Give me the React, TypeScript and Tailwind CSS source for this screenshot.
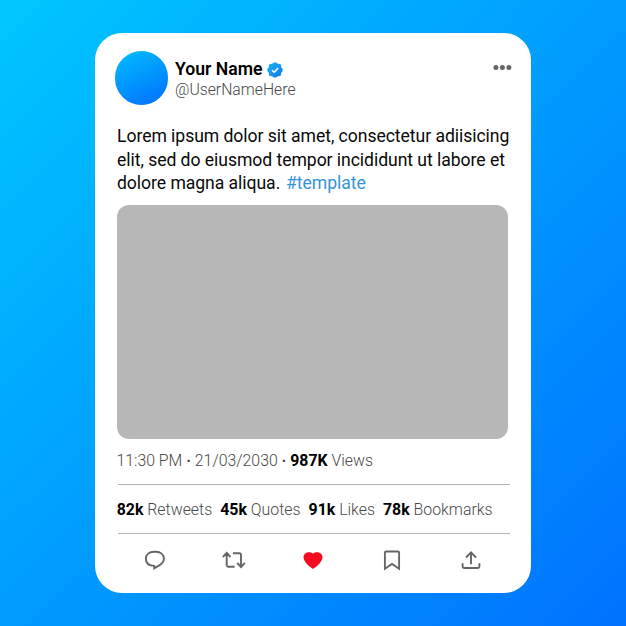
import React from "react";

function Stat({ value, label }: { value: string; label: string }) {
  return (
    <span>
      <b className="font-bold text-black">{value}</b> {label}
    </span>
  );
}

function VerifiedBadge() {
  const lobes = [0, 45, 90, 135, 180, 225, 270, 315];
  return (
    <svg className="ml-[5px] h-4 w-4" viewBox="0 0 16 16">
      <defs>
        <linearGradient id="badge" x1="1" y1="1" x2="15" y2="15" gradientUnits="userSpaceOnUse">
          <stop stopColor="#16b2fa" />
          <stop offset="1" stopColor="#1478ea" />
        </linearGradient>
      </defs>
      <g fill="url(#badge)">
        <circle cx="8" cy="8" r="6.9" />
        {lobes.map((a) => (
          <circle
            key={a}
            cx={8 + 5.6 * Math.cos((a * Math.PI) / 180)}
            cy={8 + 5.6 * Math.sin((a * Math.PI) / 180)}
            r="2.2"
          />
        ))}
      </g>
      <path d="M5 8.2 7.2 10.3 11.2 5.9" fill="none" stroke="#fff" strokeWidth="1.5" />
    </svg>
  );
}

export default function App() {
  return (
    <div className="flex h-[626px] w-[626px] bg-[linear-gradient(135deg,#00c6ff,#0072ff)] pl-[95px] pt-[33px] font-[Roboto,sans-serif]">
      <main className="flex h-[560px] w-[436px] flex-col rounded-[27px] bg-white pl-[22px] pr-5">
        <header className="-ml-[2px] mt-[18px] flex h-[54px]">
          <div className="h-[54px] w-[53px] shrink-0 rounded-full bg-[linear-gradient(155deg,#00baff_5%,#0072ff_95%)]" />
          <div className="ml-[7px] flex flex-col pt-2">
            <div className="flex h-[21px] items-center whitespace-nowrap">
              <h1 className="text-[17.6px] font-semibold text-black">Your Name</h1>
              <VerifiedBadge />
            </div>
            <p className="h-[19px] text-[15.75px] font-[350] leading-[20px] text-[#484848]">@UserNameHere</p>
          </div>
          <svg className="ml-auto mr-[-1px] mt-[13px] h-[7px] w-[19px]" viewBox="0 0 19 7" fill="#656565">
            <circle cx="2.9" cy="3.5" r="2.5" />
            <circle cx="9.4" cy="3.5" r="2.5" />
            <circle cx="15.9" cy="3.5" r="2.5" />
          </svg>
        </header>

        <div className="mt-[20px] whitespace-nowrap text-[17.6px] leading-[23.7px] tracking-[-0.055px] text-[#080808]">
          <p>Lorem ipsum dolor sit amet, consectetur adiisicing</p>
          <p>elit, sed do eiusmod tempor incididunt ut labore et</p>
          <p>
            dolore magna aliqua. <span className="ml-[1.5px] text-[#3494d9]">#template</span>
          </p>
        </div>

        <div className="ml-[0.4px] mt-[8.9px] h-[234px] w-[391px] shrink-0 rounded-[12px] bg-[#b7b7b7]" />

        <p className="-ml-[0.5px] mt-[10px] h-[23px] whitespace-nowrap text-[15.85px] font-[350] leading-[23px] text-[#484848]">
          11:30 PM <b className="font-bold">·</b> 21/03/2030 <b className="font-bold">·</b>{" "}
          <Stat value="987K" label="Views" />
        </p>

        <div className="ml-[0.5px] mt-[12px] flex h-[50px] w-[392.5px] shrink-0 items-center border-y border-[#b4b4b4]">
          <div className="-ml-[0.8px] flex gap-[8px] whitespace-nowrap pt-[1.5px] text-[15.88px] font-[350] text-[#484848]">
            <Stat value="82k" label="Retweets" />
            <Stat value="45k" label="Quotes" />
            <Stat value="91k" label="Likes" />
            <Stat value="78k" label="Bookmarks" />
          </div>
        </div>

        <footer className="ml-[26px] mt-[14px] flex w-[340px] justify-between">
          <svg className="h-6 w-6" viewBox="0 0 24 24" fill="none" stroke="#666" strokeWidth="1.9">
            <path d="M11.2 17.9C6.2 17.6 2.9 15 2.9 10.9c0-4.3 3.3-7.1 8-7.1h2c4.7 0 8 2.8 8 7 0 2.8-1.5 4.6-4.2 6.3L11.2 20.4Z" />
          </svg>
          <svg className="h-6 w-6" viewBox="0 0 24 24" fill="none" stroke="#666" strokeWidth="1.9">
            <path d="M.9 9 4.7 4.9 8.5 9M4.7 5.4V17.3q0 1.5 1.5 1.5H12.6M11 5.2h6.5q1.5 0 1.5 1.5V18.7M15.2 14.9 19 19l3.8-4.1" />
          </svg>
          <svg className="h-6 w-6" viewBox="0 0 24 24" fill="#f50b20">
            <path d="M12 20.9C9 19.2 2.5 13.9 2.5 9.3c0-5 6.3-6.6 9.5-3.6 3.2-3 9.5-1.4 9.5 3.6 0 4.6-6.5 9.9-9.5 11.6Z" />
          </svg>
          <svg className="h-6 w-6" viewBox="0 0 24 24" fill="none" stroke="#666" strokeWidth="1.9">
            <path d="M4.9 20.8V4.8q0-1.3 1.3-1.3h11.6q1.3 0 1.3 1.3v16L12 16Z" />
          </svg>
          <svg className="h-6 w-6" viewBox="0 0 24 24" fill="none" stroke="#666" strokeWidth="1.9">
            <path d="M12 16.2V5M7 9.5 12 4.4l5 5.1M3.6 15.2V18.5q0 1.5 1.5 1.5h13.8q1.5 0 1.5-1.5v-3.3" />
          </svg>
        </footer>
      </main>
    </div>
  );
}
